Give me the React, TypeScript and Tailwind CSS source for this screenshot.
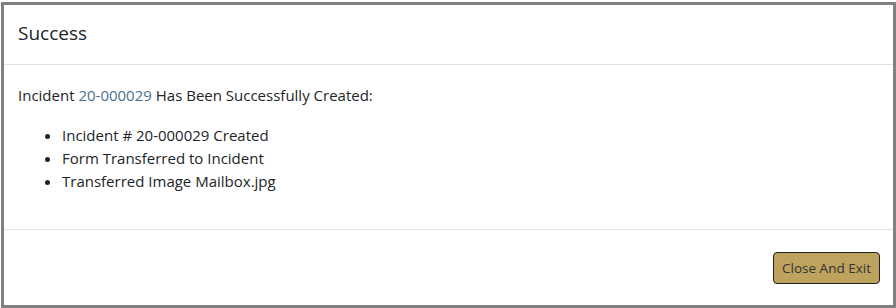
import React from "react";

export default function App() {
  return (
    <div className="w-[896px] h-[308px] bg-white pt-[2px] pl-[1px]" style={{ fontFamily: '"Open Sans", "Noto Sans", sans-serif' }}>
      <div className="w-[895px] h-[306px] border-[3px] border-[#808080] bg-white flex flex-col text-[#212529]">
        <div className="h-[60px] border-b border-[#dee2e6] flex items-center px-[14px] pb-[3px]">
          <h5 className="text-[19px] leading-[27px] font-medium">Success</h5>
        </div>
        <div className="h-[165px] border-b border-[#dee2e6] px-[14px] pt-[19px] text-[15px] leading-[23px]">
          <p>
            Incident <a className="text-[#4a6f8f]">20-000029</a> Has Been Successfully Created:
          </p>
          <ul className="list-disc pl-[44px] mt-[17px]">
            <li>Incident # 20-000029 Created</li>
            <li>Form Transferred to Incident</li>
            <li>Transferred Image Mailbox.jpg</li>
          </ul>
        </div>
        <div className="flex-1 flex items-center justify-end pr-[13px] pt-[1px]">
          <button className="h-[32px] px-[8px] bg-[#bda35d] border border-[#222] rounded-[4px] text-[13.5px] text-[#333]">
            Close And Exit
          </button>
        </div>
      </div>
    </div>
  );
}
